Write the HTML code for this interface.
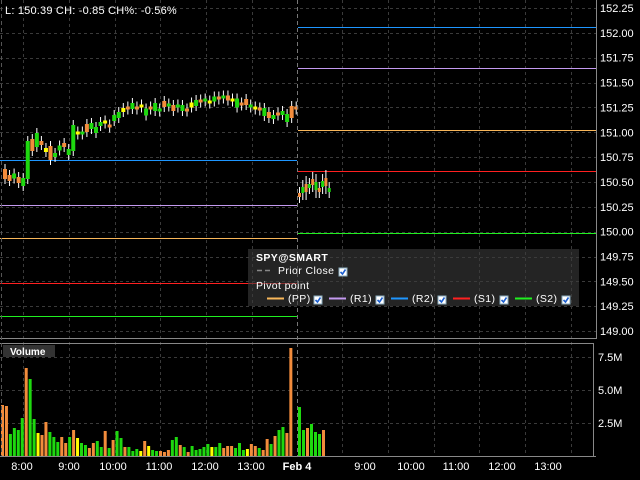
<!DOCTYPE html>
<html><head><meta charset="utf-8"><style>
body{margin:0;background:#000;width:640px;height:480px;overflow:hidden;font-family:"Liberation Sans",sans-serif}
svg{display:block}
text{font-family:"Liberation Sans",sans-serif}
</style></head><body>
<svg id="s" width="640" height="480" xmlns="http://www.w3.org/2000/svg">
<rect width="640" height="480" fill="#000"/>
<g id="grid" stroke="#3a3a3a" stroke-dasharray="3,3" stroke-width="1"></g>
<g id="lines"></g>
<g id="candles"></g>
<g id="vol"></g>
<line x1="596.5" y1="0" x2="596.5" y2="338" stroke="#888"/>
<line x1="0" y1="338.5" x2="597" y2="338.5" stroke="#888"/>
<line x1="0" y1="343.5" x2="593" y2="343.5" stroke="#888"/>
<line x1="593.5" y1="343" x2="593.5" y2="456" stroke="#888"/>
<line x1="0" y1="456.5" x2="596" y2="456.5" stroke="#888"/>
<line x1="297.5" y1="0" x2="297.5" y2="456" stroke="#777" stroke-dasharray="4,3"/>
<line x1="1.5" y1="0" x2="1.5" y2="456" stroke="#555" stroke-dasharray="4,3"/>
<text x="5" y="14" fill="#fff" font-size="11" letter-spacing="0.2">L: 150.39 CH: -0.85 CH%: -0.56%</text>
<g id="axis" fill="#fff" font-size="11"></g>
<rect x="3" y="345" width="52" height="12" fill="#333"/>
<text x="10" y="355" fill="#fff" font-size="10" font-weight="bold">Volume</text>
<rect x="248" y="249" width="331" height="57" fill="#3c3c3c" fill-opacity="0.6"/>
<g font-size="10.5" fill="#fff" letter-spacing="0.4">
<text x="256" y="261" font-weight="bold">SPY@SMART</text>
<text x="278" y="274">Prior Close</text>
<line x1="257" y1="270.5" x2="273" y2="270.5" stroke="#888" stroke-dasharray="5,3" stroke-width="1.5"/>
<text x="256" y="289">Pivot point</text>
<line x1="267" y1="298.5" x2="284" y2="298.5" stroke="#f9b75a" stroke-width="2"/><text x="288" y="302">(PP)</text>
<line x1="329" y1="298.5" x2="346" y2="298.5" stroke="#c49af0" stroke-width="2"/><text x="350" y="302">(R1)</text>
<line x1="391" y1="298.5" x2="408" y2="298.5" stroke="#1e96ff" stroke-width="2"/><text x="412" y="302">(R2)</text>
<line x1="453" y1="298.5" x2="470" y2="298.5" stroke="#ff2020" stroke-width="2"/><text x="474" y="302">(S1)</text>
<line x1="515" y1="298.5" x2="532" y2="298.5" stroke="#20f020" stroke-width="2"/><text x="536" y="302">(S2)</text>
</g>
<g id="cb"></g>
</svg>
<script>
var NS="http://www.w3.org/2000/svg";
function el(p,t,a){var e=document.createElementNS(NS,t);for(var k in a)e.setAttribute(k,a[k]);document.getElementById(p).appendChild(e);return e;}
[23,69,115,160,206,252,342,388,434,479,525,571].forEach(function(x){el("grid","line",{x1:x+.5,y1:0,x2:x+.5,y2:456});});
for(var i=0;i<14;i++){var y=Math.round(8+i*24.85)+.5;el("grid","line",{x1:0,y1:y,x2:596,y2:y});}
[357,390,423].forEach(function(y){el("grid","line",{x1:0,y1:y+.5,x2:593,y2:y+.5});});
var pr=["152.25","152.00","151.75","151.50","151.25","151.00","150.75","150.50","150.25","150.00","149.75","149.50","149.25","149.00"];
pr.forEach(function(p,i){var t=el("axis","text",{x:600,y:12+i*24.85});t.textContent=p;});
[["7.5M",361],["5.0M",394],["2.5M",427]].forEach(function(a){var t=el("axis","text",{x:598,y:a[1]});t.textContent=a[0];});
[["8:00",22],["9:00",69],["10:00",113],["11:00",159],["12:00",205],["13:00",251],["9:00",365],["10:00",411],["11:00",456],["12:00",502],["13:00",548]].forEach(function(a){var t=el("axis","text",{x:a[1],y:470,"text-anchor":"middle"});t.textContent=a[0];});
var f=el("axis","text",{x:297,y:470,"text-anchor":"middle","font-weight":"bold"});f.textContent="Feb 4";
[[160,"#1e96ff"],[205,"#c49af0"],[238,"#f9b75a"],[283,"#ff2020"],[316,"#20f020"]].forEach(function(a){el("lines","line",{x1:0,y1:a[0]+.5,x2:297,y2:a[0]+.5,stroke:a[1]});});
[[27,"#1e96ff"],[68,"#c49af0"],[130,"#f9b75a"],[171,"#ff2020"],[233,"#20f020"]].forEach(function(a){el("lines","line",{x1:298,y1:a[0]+.5,x2:596,y2:a[0]+.5,stroke:a[1]});});
var mids=[174,178,176,180,182,160,145,140,143,150,153,155,148,145,152,138,133,133,128,126,130,124,122,126,118,115,110,108,106,108,106,112,108,107,110,104,105,108,106,108,110,105,103,101,100,102,99,98,97,98,100,103,104,102,106,108,109,112,115,117,114,113,118,112,108];
var hs=[10,6,5,6,8,38,12,14,4,4,14,4,5,4,6,26,3,3,8,6,6,4,3,3,6,6,4,3,6,3,3,7,3,8,3,6,3,6,3,6,3,5,6,3,3,3,5,3,3,5,3,9,3,6,3,3,3,8,6,4,3,4,8,12,3];
var cols=["o","o","g","o","g","g","o","g","o","y","o","g","g","o","g","g","y","g","o","g","g","g","y","o","g","g","y","o","g","o","y","g","o","g","g","o","g","o","g","g","o","y","g","o","g","y","g","o","g","o","y","g","o","o","g","y","o","g","o","g","o","g","g","o","o"];
var C={o:"#f28c3c",g:"#1ed80f",y:"#ffff00"};
for(var i=0;i<mids.length;i++){var x=3+i*4.55,m=mids[i],h=hs[i];
 el("candles","line",{x1:x+2,y1:m-h/2-5,x2:x+2,y2:m+h/2+5,stroke:"#fff"});
 el("candles","rect",{x:x,y:m-h/2,width:4,height:h,fill:C[cols[i]]});}
var m2=[195,190,188,186,182,186,190,184,182,190];
for(var i=0;i<m2.length;i++){var x=298+i*3.3,m=m2[i],h=4+(i%3)*2;
 el("candles","line",{x1:x+1.5,y1:m-h-4,x2:x+1.5,y2:m+h+4,stroke:"#fff"});
 el("candles","rect",{x:x,y:m-h/2,width:3,height:h,fill:C[i%2?"g":"o"]});}
var tops=[405,406,434,428,430,418,368,379,419,433,435,422,432,437,442,437,443,437,430,438,443,445,448,443,441,447,431,448,440,431,438,447,447,451,449,451,441,446,450,451,451,452,450,440,437,445,447,452,446,450,449,447,444,447,447,443,448,446,446,448,443,450,449,444,446,448,450,439,444,436,430,427,433,348];
var vc="ooggggoggyoogggoogoyggooggogoggogggyoyggoooggogogggggyggooogggyoogoogoggooo";
for(var i=0;i<tops.length;i++){el("vol","rect",{x:1+i*3.95,y:tops[i],width:3,height:456-tops[i],fill:C[vc[i]||"g"]});}
var rv=[[298,407,"g"],[302,430,"g"],[306,428,"o"],[310,424,"g"],[314,432,"g"],[318,434,"g"],[322,430,"o"]];
rv.forEach(function(a){el("vol","rect",{x:a[0],y:a[1],width:3,height:456-a[1],fill:C[a[2]]});});
[[339,268],[314,296],[376,296],[438,296],[500,296],[562,296]].forEach(function(a){
 el("cb","rect",{x:a[0],y:a[1],width:8,height:8,fill:"#fff",stroke:"#8ab"});
 el("cb","path",{d:"M"+(a[0]+1.5)+" "+(a[1]+4)+" l2 2 l3 -4.5",stroke:"#1c5fd0","stroke-width":1.6,fill:"none"});});
</script>
</body></html>
